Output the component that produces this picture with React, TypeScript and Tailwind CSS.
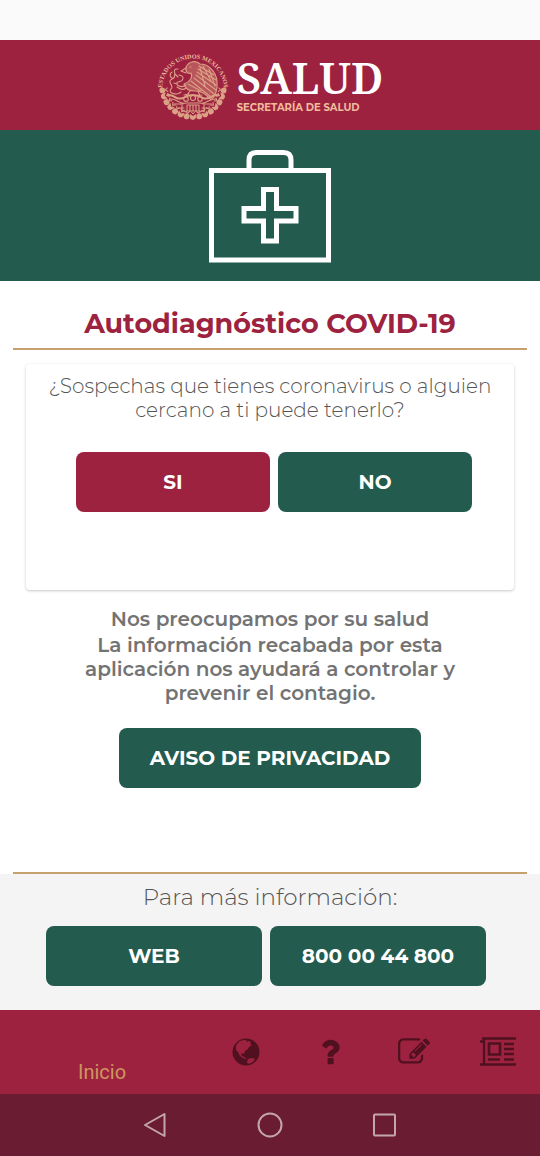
import type { ReactNode } from "react";

const sans = "font-['Montserrat','Inter',sans-serif]";

function Emblem() {
  const leaves = Array.from({ length: 15 }, (_, i) => 8 + (i * 164) / 14);
  return (
    <svg viewBox="0 2 72 74" className="h-[74px] w-[72px] shrink-0 overflow-visible" role="img" aria-label="Escudo Nacional" fill="none" stroke="#dba085">
      <defs>
        <path id="arc" d="M5.500 47 A31 31 0 1 1 66.500 47" />
      </defs>
      <text fill="#e9bb9f" stroke="none" fontSize="6.200" fontFamily="Liberation Serif, serif" fontWeight="700">
        <textPath href="#arc" startOffset="50%" textAnchor="middle">ESTADOS UNIDOS MEXICANOS</textPath>
      </text>
      {leaves.map((a, i) => (
        <g key={a} transform={`rotate(${a} 36 38)`}>
          {i % 2 === 0 ? (
            <circle cx="67" cy="38" r="2.900" fill="#dba085" stroke="none" />
          ) : (
            <path d="M64 35 Q69 34 70 38 Q69 42 64 41 L66 38Z" fill="#dba085" stroke="none" />
          )}
          <path d="M61.500 36 l2.500 2 l-2.500 2 M67 34 l2 -1" strokeWidth="1" />
        </g>
      ))}
      <g strokeWidth="1.100" strokeLinecap="round" strokeLinejoin="round">
        <path d="M29 19 C32 13 39 12 43 16 C52 16 59 24 60 33 C61 42 58 49 54 52 C50 47 45 43 38 43 C32 43 28 40 27 36 C33 34 36 29 34 25 C32 26 28 25 29 19Z" fill="#b9565b" />
        <path d="M29 20 l-5 3 l5 2 M33 19 h1 M42 18 L57 27 M41 21 L59 32 M40 24 L59 37 M39 27 L59 42 M37 30 L57 46 M34 33 L54 49 M31 36 L44 43 M46 18 L54 33 M52 21 L58 38 M43 20 L48 38" />
        <path d="M21 21 C13 20 22 29 15 31 C9 34 18 38 14 41 C10 45 20 48 24 44 M22 27 C28 28 27 33 21 34 C17 36 24 41 29 37 M15 24 c-3 2 -2 5 0 6 M20 39 c4 3 7 3 9 1 M18 26 l3 3 M17 35 l3 1" />
        <path d="M33 43 l-4 5 M41 43 l2 5 M27 47 l5 -1 M39 48 l6 -1" />
        <path d="M11 47 C18 46 18 53 26 50 C32 46 40 46 46 50 C53 53 54 46 61 47" strokeWidth="2" />
        <path d="M13 51 C20 50 22 57 29 55 H43 C49 57 52 50 59 51 M17 56 h9 M46 56 h9 M21 60 h6 M45 60 h6" />
        <circle cx="29" cy="51" r="2.300" />
        <circle cx="36" cy="50" r="2.500" />
        <circle cx="43" cy="51" r="2.300" />
        <path d="M30 57 h12 v6 h-12z M33 57 v6 M36 57 v6 M39 57 v6 M25 57 v5 l4 2 M47 57 v5 l-4 2" />
      </g>
    </svg>
  );
}

function FirstAidKit() {
  return (
    <svg viewBox="0 0 122 114" className="h-[114px] w-[122px]" fill="none" stroke="white" strokeWidth="5" aria-hidden="true">
      <path d="M2.500 21.500 H119.500 V111 H2.500Z" />
      <path d="M40 20 V11 Q40 3.500 47.500 3.500 H74.500 Q82 3.500 82 11 V20" />
      <path d="M54.500 40.500 H67.500 V59.500 H87 V72 H67.500 V92 H54.500 V72 H35 V59.500 H54.500Z" />
    </svg>
  );
}

function Globe() {
  return (
    <svg viewBox="0 0 28 28" className="size-7" aria-hidden="true">
      <circle cx="14" cy="14" r="13.500" fill="currentColor" />
      <path d="M5 6 L8 3 L12 2 L15 2.500 L14 4 L17 3 L19 4 L18 6 L20 7 L17 9 L16 11 L13 13 L12 16 L10 15 L9 17 L12 19 L15 21 L13 21 L8 18 L6 14 L4 12 L4 8Z" fill="#9d2240" />
      <path d="M16 21 L20 20 L23 21 L21 24 L16 26 L15 24Z" fill="#9d2240" />
    </svg>
  );
}

function Question() {
  return (
    <svg viewBox="0 0 1792 1792" className="size-[34px]" fill="currentColor" aria-hidden="true">
      <path d="M1088 1256v240q0 16-12 28t-28 12h-240q-16 0-28-12t-12-28v-240q0-16 12-28t28-12h240q16 0 28 12t12 28zm316-600q0 54-15.500 101t-35 76.500-55 59.500-57.500 43.500-61 35.500q-41 23-68.500 65t-27.500 67q0 17-12 32.500t-28 15.500h-240q-15 0-25.500-18.500t-10.500-37.500v-45q0-83 65-156.500t143-108.500q59-27 84-56t25-76q0-42-46.500-74t-107.500-32q-65 0-108 29-35 25-107 115-13 16-31 16-12 0-25-8l-164-125q-13-10-15.500-25t5.500-28q160-266 464-266 80 0 161 31t146 83 106 127.500 41 158.500z" />
    </svg>
  );
}

function Edit() {
  return (
    <svg viewBox="0 0 1792 1792" className="size-8" fill="currentColor" aria-hidden="true">
      <path d="M888 1184l116-116-152-152-116 116v56h96v96h56zm440-720q-16-16-33 1l-350 350q-17 17-1 33t33-1l350-350q17-17 1-33zm80 594v190q0 119-84.500 203.500t-203.500 84.500h-832q-119 0-203.500-84.500t-84.500-203.500v-832q0-119 84.500-203.500t203.500-84.500h832q63 0 117 25 15 7 18 23 3 17-9 29l-49 49q-14 14-32 8-23-6-45-6h-832q-66 0-113 47t-47 113v832q0 66 47 113t113 47h832q66 0 113-47t47-113v-126q0-13 9-22l64-64q15-15 35-7t20 29zm-96-738l288 288-672 672h-288v-288zm444 132l-92 92-288-288 92-92q28-28 68-28t68 28l152 152q28 28 28 68t-28 68z" />
    </svg>
  );
}

function Newspaper() {
  return (
    <svg viewBox="0 0 36 30" className="h-[30px] w-9" fill="none" stroke="currentColor" aria-hidden="true">
      <path d="M2 1.500 H36 M0 27.500 H36 M4 1.500 V27.500 M0 4.500 H4" strokeWidth="2.300" />
      <path d="M9 6.500 H20 V17.500 H9Z" strokeWidth="2.600" />
      <path d="M24 7 H34 M24 12 H34 M24 17 H34 M8 22.500 H20 M24 22.500 H34" strokeWidth="2.400" />
    </svg>
  );
}

function Action({ children, red = false, className = "" }: { children: ReactNode; red?: boolean; className?: string }) {
  return (
    <button type="button" className={`h-[60px] rounded-lg text-xl font-bold text-white ${red ? "bg-[#9d2240]" : "bg-[#235b4e]"} ${className}`}>
      {children}
    </button>
  );
}

function Tab({ label, children }: { label: string; children: ReactNode }) {
  return (
    <button type="button" aria-label={label} className="flex h-[84px] flex-1 items-center justify-center text-[#50101f]">
      {children}
    </button>
  );
}

export default function App() {
  return (
    <div className={`flex min-h-screen flex-col bg-white text-[#555] ${sans}`}>
      <div className="h-10 bg-[#fafafa]" />
      <header className="flex h-[90px] items-center justify-center gap-2 bg-[#9d2240] pt-1">
        <Emblem />
        <div className="flex flex-col">
          <span className="font-['Noto_Serif','DejaVu_Serif',serif] text-[43px] leading-10 font-semibold text-white">SALUD</span>
          <span className="pt-0.5 text-[10px] leading-4 font-bold text-[#f0bc9c]">SECRETARÍA DE SALUD</span>
        </div>
      </header>
      <div className="flex h-[151px] items-center justify-center bg-[#235b4e]">
        <FirstAidKit />
      </div>

      <main className="flex flex-1 flex-col items-center text-center">
        <div className="w-full px-[13px]">
          <h1 className="border-b-2 border-[#c7a16b] pt-[25px] pb-1.5 text-[27px] leading-9 font-bold text-[#9d2240]">Autodiagnóstico COVID-19</h1>
        </div>
        <div className="mt-[14px] w-full px-[26px]">
          <section className="h-[226px] rounded-sm bg-white px-5 pt-2.5 shadow-[0_1px_3px_rgba(0,0,0,0.22)]">
            <p className="text-xl leading-6 font-light">
              ¿Sospechas que tienes coronavirus o alguien cercano a ti puede tenerlo?
            </p>
            <div className="mt-[30px] flex gap-2 pr-[22px] pl-[30px]">
              <Action red className="flex-1">SI</Action>
              <Action className="flex-1">NO</Action>
            </div>
          </section>
        </div>
        <div className="mt-4 flex w-full flex-col gap-px px-20 text-xl font-semibold text-[#737373]">
          <p className="leading-[26px]">Nos preocupamos por su salud</p>
          <p className="leading-6">La información recabada por esta aplicación nos ayudará a controlar y prevenir el contagio.</p>
        </div>
        <Action className="mt-[23px] w-[302px]">AVISO DE PRIVACIDAD</Action>
      </main>

      <section className="bg-[linear-gradient(to_bottom,#fff_2px,#f4f4f4_2px)] px-[13px] pb-6 text-center">
        <h2 className="border-t-2 border-[#c7a16b] pt-[7px] text-[23px] leading-8 font-light">Para más información:</h2>
        <div className="mt-[13px] flex gap-2 pr-[41px] pl-[33px]">
          <Action className="flex-1">WEB</Action>
          <Action className="flex-1">800 00 44 800</Action>
        </div>
      </section>

      <nav className="flex h-[84px] bg-[#9d2240]">
        <button type="button" className="flex w-[204px] items-end justify-center pb-2.5 font-['Roboto',sans-serif] text-xl leading-6 text-[#cf955f]">Inicio</button>
        <Tab label="Web"><Globe /></Tab>
        <Tab label="Ayuda"><Question /></Tab>
        <Tab label="Editar"><Edit /></Tab>
        <Tab label="Noticias"><Newspaper /></Tab>
      </nav>
      <div className="flex h-[62px] items-center justify-center gap-[88px] bg-[#691c32] text-[#c4a5ae]">
        <button type="button" aria-label="Atrás">
          <svg viewBox="0 0 26 26" className="size-[26px]" fill="none" stroke="currentColor" strokeWidth="2" strokeLinejoin="round"><path d="M2 13 L21.500 2 V24Z" /></svg>
        </button>
        <button type="button" aria-label="Pantalla de inicio">
          <svg viewBox="0 0 26 26" className="size-[26px]" fill="none" stroke="currentColor" strokeWidth="2"><circle cx="13" cy="13" r="11.500" /></svg>
        </button>
        <button type="button" aria-label="Recientes">
          <svg viewBox="0 0 26 26" className="size-[26px]" fill="none" stroke="currentColor" strokeWidth="2"><rect x="3" y="2.500" width="21" height="21" rx="1" /></svg>
        </button>
      </div>
    </div>
  );
}
